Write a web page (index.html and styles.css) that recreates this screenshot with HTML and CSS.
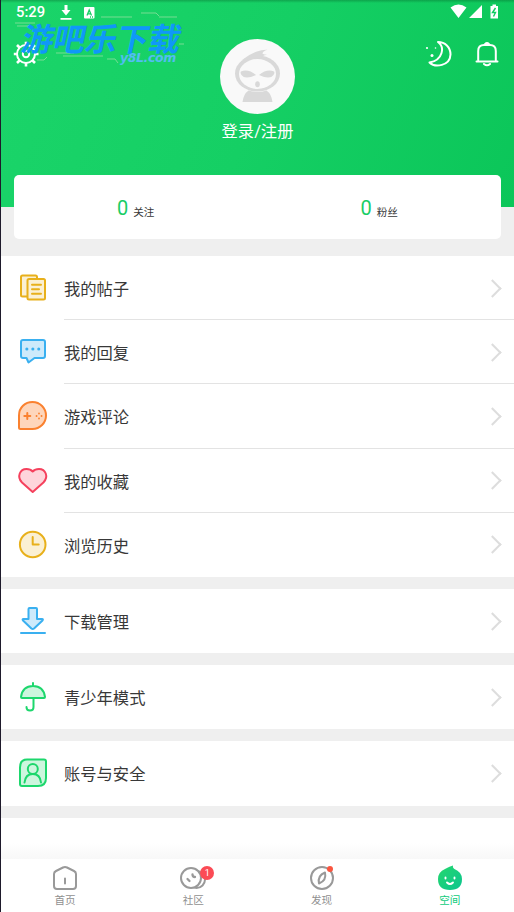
FILE: index.html
```html
<!DOCTYPE html>
<html lang="zh-CN">
<head>
<meta charset="utf-8">
<title>空间</title>
<link rel="stylesheet" href="styles.css">
</head>
<body>
<div class="app">
  <header class="hero">
    <div class="status">
      <span class="time">5:29</span>
      <svg class="st-down" width="12" height="16" viewBox="0 0 12 16"><path d="M4.5 0h3v5h3L6 10.500 1.500 5h3zM.5 13h11v1.800H.5z" fill="#fff"/></svg>
      <svg class="st-a" width="11" height="12" viewBox="0 0 11 12"><rect width="10.500" height="11.500" rx="1" fill="#fff"/><path d="M3 8.500 5.200 3l2.300 5.500M3.800 6.800h2.800M6 10h1M8 10h1" fill="none" stroke="#18d066" stroke-width="1.300"/></svg>
      <svg class="st-right" width="50" height="16" viewBox="0 0 50 16"><path d="M.5 3.500Q8.500-2.500 16.500 3.500L8.500 14zM19 14 32 1v13zM40.500 2h2V.5h3.500v1.500h2V14.500h-7.500z" fill="#fff"/><path d="m45.500 4-3 4.500h3l-2 4" fill="none" stroke="#10cc61" stroke-width="1.400"/></svg>
    </div>
    <svg class="gear" width="26" height="26" viewBox="0 0 26 26" fill="none" stroke="#fff"><circle cx="13" cy="13" r="9" stroke-width="2"/><circle cx="13" cy="13" r="3.200" stroke-width="2"/><path d="M13 .8v3M13 22v3.500M.8 13H4M22 13h3.500M4 4l2.500 2.500M19.500 19.500 22 22M4 22l2.500-2.500M19.500 6.500 22 4" stroke-width="2.600"/></svg>
    <svg class="moon" width="28" height="28" viewBox="0 0 28 28"><path d="M13 2C20 7 18 20 4.500 22.500 10 28 25 26 25.500 14.500 25.500 7 20 2 13 2z" fill="none" stroke="#fff" stroke-width="2" stroke-linejoin="round"/><g fill="#fff"><circle cx="2" cy="8" r="1.100"/><circle cx="10.500" cy="8" r=".8"/><circle cx="7" cy="15.500" r="1.500"/></g></svg>
    <svg class="bell" width="24" height="26" viewBox="0 0 24 26" fill="none" stroke="#fff" stroke-width="2" stroke-linecap="round" stroke-linejoin="round"><path d="M3.200 19V10Q3.200 4 9 4h6q5.800 0 5.800 6v9M1.500 20.500h21M10.200 3q1.800-2 3.600 0M9 23q3 2.500 6 0"/></svg>
    <div class="mark">
      <svg class="mark-lines" width="184" height="60" viewBox="0 0 184 60" fill="none" stroke="#8fdf9f" stroke-width=".8"><path d="M14 11h20M16 14h14M100 5h31M140 1h15l3 3M158 5h18M36 48h7l3-3M55 41h18M106 47h8l3 4M62 44h40M178 32h5"/></svg>
      <div class="mark-name">游吧乐下载</div>
      <div class="mark-site">y8L.com</div>
    </div>
    <div class="profile">
      <svg class="avatar" width="75" height="75" viewBox="0 0 75 75"><circle cx="37.500" cy="37.500" r="37.500" fill="#f9f9f9"/><ellipse cx="37.500" cy="34.500" rx="22.500" ry="18" fill="#d9d9d9"/><path d="M22 21Q30 15 37 12.500q5-2 10.500-1.700-5 1.500-5 4 2 1 4.500 1-5 1-5.500 3z" fill="#d9d9d9"/><ellipse cx="37.500" cy="35" rx="18.500" ry="15" fill="#f9f9f9"/><path d="M21 32.500q7-3 15 3.500-11 5-14.500 0-1.500-2-.5-3.500zM54 32.500q-7-3-15 3.500 11 5 14.500 0 1.500-2 .5-3.500z" fill="#d9d9d9"/><ellipse cx="37.500" cy="45.300" rx="2.300" ry="3" fill="#d9d9d9"/><path d="M22.500 63q1-8 6-11.500 9 3 18 0 5 3.500 6 11.500z" fill="#d9d9d9"/></svg>
      <div class="login">登录/注册</div>
    </div>
  </header>
  <section class="stats">
    <div class="stat"><b>0</b><span>关注</span></div>
    <div class="stat"><b>0</b><span>粉丝</span></div>
  </section>
  <main>
    <section class="group">
      <div class="row"><svg class="icon" viewBox="0 0 34 34" stroke="#e8b01b" fill="#fbf0d3"><rect x="5" y="4.500" width="16" height="21" rx="1.500"/><rect x="11.500" y="8" width="17.500" height="20.500" rx="1.500"/><path d="M16 13.800h9M16 18.300h7M16 22.800h9"/></svg><div class="cell">我的帖子<i></i></div></div>
      <div class="row"><svg class="icon" viewBox="0 0 34 34" stroke="#3ab0f0" fill="#cdeafb"><path d="M7 5h20q2 0 2 2v14q0 2-2 2h-8.500l-6 4.500L10.500 23H7q-2 0-2-2V7q0-2 2-2z"/><path d="M10.800 14h.1M16.800 14h.1M22.700 14h.1" stroke-width="3"/></svg><div class="cell">我的回复<i></i></div></div>
      <div class="row"><svg class="icon" viewBox="0 0 34 34" stroke="#fa812f" fill="#fed6bb"><path d="M3 28.500V16.500C3 8.500 9 3 16.500 3S30 9 30 16.500 24 30 16.500 30h-12Q3 30 3 28.500z"/><path d="M8.300 17h6M11.300 14v6"/><path d="M23 14.500v.1M23 19.500v.1M20.500 17h.1M25.500 17h.1" stroke-width="1.800"/></svg><div class="cell">游戏评论<i></i></div></div>
      <div class="row"><svg class="icon" viewBox="0 0 34 34" stroke="#f5415d" fill="#fed5db"><path d="M16.700 28 6 18.500C.5 12.500 4 5 10.500 5q4 0 6.200 2.500Q19 5 23 5C29.500 5 33 12.500 27.400 18.500z"/></svg><div class="cell">我的收藏<i></i></div></div>
      <div class="row"><svg class="icon" viewBox="0 0 34 34" stroke="#e8b01b" fill="#fbf0d3"><circle cx="16.700" cy="16.500" r="12.800"/><path d="M16.700 9v7.500h6" fill="none"/></svg><div class="cell">浏览历史<i></i></div></div>
    </section>
    <section class="group"><div class="row"><svg class="icon" viewBox="0 0 34 34" stroke="#3ab0f0" fill="#cdeafb"><path d="M12.500 5q0-1 1-1h6.500q1 0 1 1v10h5q1.500 0 .5 1.500l-8.500 8q-1.300 1-2.600 0l-8.400-8Q6 15 7.500 15h5zM5 29h24"/></svg><div class="cell">下载管理<i></i></div></div></section>
    <section class="group"><div class="row"><svg class="icon" viewBox="0 0 34 34" stroke="#1dd76d" fill="#cdf6de"><path d="M5 17Q6.500 6 17 6t12 11q0 1-1 1H6q-1 0-1-1zM17 3v2"/><path d="M17.500 18v9q0 3.500-3.500 3.500T10.500 27" fill="none"/></svg><div class="cell">青少年模式<i></i></div></div></section>
    <section class="group"><div class="row"><svg class="icon" viewBox="0 0 34 34" stroke="#1dd76d" fill="#cdf6de"><path d="M11 3.500h17q2 0 2 2V22q0 8-8 8H6q-2 0-2-2V11.500q0-8 7-8z"/><circle cx="16.800" cy="13" r="5"/><path d="M8.500 26.500q1-8.500 8.300-8.500t8.200 8.500" fill="none"/></svg><div class="cell">账号与安全<i></i></div></div></section>
  </main>
  <div class="rest"></div>
  <nav class="tabs">
    <div class="tab"><svg width="28" height="28" viewBox="0 0 28 28" fill="none" stroke="#999" stroke-width="2" stroke-linecap="round" stroke-linejoin="round"><path d="M3 10q0-2 2-3l7-3.500q2-1 4 0L23 7q2 1 2 3v12q0 3-3 3H6q-3 0-3-3zM14 14.500v5"/></svg><span>首页</span></div>
    <div class="tab"><svg width="28" height="28" viewBox="0 0 28 28" fill="none" stroke="#999" stroke-width="2" stroke-linecap="round"><circle cx="17.500" cy="15.500" r="8.500"/><circle cx="12" cy="14" r="10" fill="#fff"/><path d="M8.500 15l2 2M13.500 10.500q0 2.500 2.500 2.500" stroke-width="2.300"/></svg><span>社区</span><em class="badge">1</em></div>
    <div class="tab"><svg width="28" height="28" viewBox="0 0 28 28" fill="none" stroke="#999" stroke-width="2"><circle cx="14" cy="14" r="11"/><path d="M17 8.500q1.800 8-6 11-1.700-8 6-11z" stroke-linejoin="round"/></svg><span>发现</span><em class="dot"></em></div>
    <div class="tab active"><svg width="28" height="28" viewBox="0 0 28 28"><defs><linearGradient id="face" x2="1" y2="1"><stop stop-color="#26d76d"/><stop offset="1" stop-color="#0bc58f"/></linearGradient></defs><path d="M2 15Q2 8 9 5q5-3 8-3.500-.7 2 1 3.200 8 3.300 8 10.300 0 11-12 11T2 15z" fill="url(#face)"/><path d="M9.500 13.500v1M18.500 13.500v1M11 18.500q3 3 6 0" fill="none" stroke="#fff" stroke-width="1.900" stroke-linecap="round"/></svg><span>空间</span></div>
  </nav>
</div>
</body>
</html>
```
FILE: styles.css
```css
* { box-sizing: border-box; }
body { margin: 0; font-family: Roboto, "Noto Sans CJK SC", sans-serif; font-weight: 400; color: #383838; }
.app { height: 912px; display: flex; flex-direction: column; border-left: 1px solid #1e1a2b; background: #efefef; overflow: hidden; }
.hero { position: relative; flex: none; height: 206.5px; background: linear-gradient(112deg, #1ad469 5%, #15cf64 50%, #0bc659 100%); color: #fff; }
.hero::before { content: ""; position: absolute; inset: 0 0 auto; height: 3px; background: linear-gradient(rgba(0,60,20,.28), transparent); }
.status { display: flex; height: 24px; padding: 4px 14px 0 15px; }
.time { font: 500 14.8px/17px Roboto, sans-serif; width: 44px; }
.st-down { margin-top: 1px; }
.st-a { margin: 3px 0 0 12px; }
.st-right { margin-left: auto; }
.gear, .moon, .bell, .mark { position: absolute; }
.gear { left: 12px; top: 41px; }
.moon { left: 424px; top: 40px; }
.bell { left: 474px; top: 41px; }
.mark { left: 0; top: 12px; width: 184px; height: 60px; }
.mark-lines { position: absolute; left: 0; top: 0; }
.mark-name { position: absolute; left: 22px; top: 5px; font: 700 32px/40px "Noto Sans CJK SC", sans-serif; color: #0f98f8; transform: skewX(-12deg); white-space: nowrap; letter-spacing: -.3px; }
.mark-site { position: absolute; left: 119px; top: 38px; font: italic 700 12.5px/15px "DejaVu Sans", sans-serif; color: #52bdf0; letter-spacing: -.4px; }
.profile { display: flex; flex-direction: column; align-items: center; padding-top: 15px; }
.avatar { display: block; }
.login { margin-top: 6px; font-size: 16.3px; line-height: 24px; }
.stats { position: relative; flex: none; display: flex; height: 64px; margin: -31.5px 13px 17px; background: #fff; border-radius: 5px; }
.stat { flex: 1; display: flex; justify-content: center; align-items: baseline; padding-top: 22px; }
.stat b { font: 400 20px/23px Roboto, sans-serif; color: #19cd65; margin-right: 5px; }
.stat span { position: relative; top: 1px; font-size: 10.6px; }
.group { background: #fff; margin-bottom: 12px; }
.row { display: flex; align-items: center; height: 64.200px; padding-left: 15px; }
.icon { width: 34px; height: 34px; stroke-width: 2; stroke-linecap: round; stroke-linejoin: round; }
.cell { display: flex; align-items: center; flex: 1; height: 100%; margin-left: 14px; padding: 1px 15px 0 0; border-bottom: 1px solid #e3e3e3; font-size: 16.300px; }
.row:last-child .cell { padding-bottom: 1px; border-bottom: 0; }
.cell i { width: 13px; height: 13px; margin-left: auto; border: solid #ddd; border-width: 2px 2px 0 0; transform: rotate(45deg); }
.rest { flex: 1; background: linear-gradient(#fff 60%, #f8f8f8); }
.tabs { flex: none; display: flex; height: 53px; background: #fff; }
.tab { position: relative; flex: 1; display: flex; flex-direction: column; align-items: center; padding-top: 5px; font-size: 10.600px; line-height: 18px; color: #909090; }
.tab svg { display: block; }
.tab.active { color: #10cb7c; }
.badge, .dot { position: absolute; border-radius: 50%; background: #fb4b55; }
.badge { left: 71px; top: 7px; width: 14px; height: 14px; color: #fff; font: 400 9px/14px Roboto, sans-serif; text-align: center; }
.dot { left: 69.500px; top: 7px; width: 6px; height: 6px; background: #fa553f; }
```
